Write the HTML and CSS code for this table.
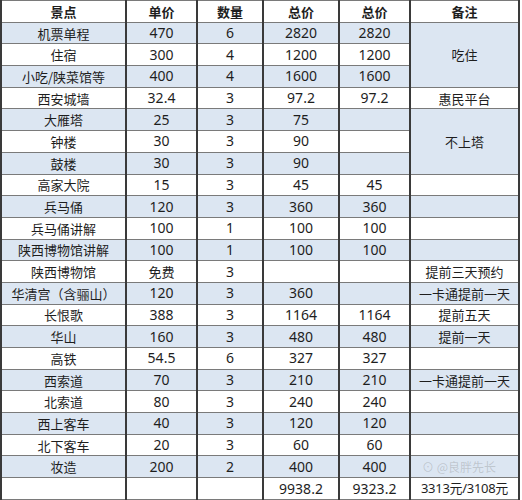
FILE: index.html
```html
<!DOCTYPE html>
<html lang="zh">
<head>
<meta charset="utf-8">
<link rel="stylesheet" href="styles.css">
</head>
<body>
<div class="sheet">
<table class="t">
<colgroup>
<col class="c1"><col class="c2"><col class="c3"><col class="c4"><col class="c5"><col class="c6">
</colgroup>
<tr class="hd"><td class="zh">景点</td><td class="zh">单价</td><td class="zh">数量</td><td class="zh">总价</td><td class="zh">总价</td><td class="zh">备注</td></tr>
<tr class="b"><td class="zh">机票单程</td><td>470</td><td>6</td><td>2820</td><td>2820</td><td class="zh note" rowspan="3">吃住</td></tr>
<tr><td class="zh">住宿</td><td>300</td><td>4</td><td>1200</td><td>1200</td></tr>
<tr class="b"><td class="zh">小吃/陕菜馆等</td><td>400</td><td>4</td><td>1600</td><td>1600</td></tr>
<tr><td class="zh">西安城墙</td><td>32.4</td><td>3</td><td>97.2</td><td>97.2</td><td class="zh">惠民平台</td></tr>
<tr class="b"><td class="zh">大雁塔</td><td>25</td><td>3</td><td>75</td><td></td><td class="zh note" rowspan="3">不上塔</td></tr>
<tr><td class="zh">钟楼</td><td>30</td><td>3</td><td>90</td><td></td></tr>
<tr class="b"><td class="zh">鼓楼</td><td>30</td><td>3</td><td>90</td><td></td></tr>
<tr><td class="zh">高家大院</td><td>15</td><td>3</td><td>45</td><td>45</td><td></td></tr>
<tr class="b"><td class="zh">兵马俑</td><td>120</td><td>3</td><td>360</td><td>360</td><td></td></tr>
<tr><td class="zh">兵马俑讲解</td><td>100</td><td>1</td><td>100</td><td>100</td><td></td></tr>
<tr class="b"><td class="zh">陕西博物馆讲解</td><td>100</td><td>1</td><td>100</td><td>100</td><td></td></tr>
<tr><td class="zh">陕西博物馆</td><td class="zh">免费</td><td>3</td><td></td><td></td><td class="zh">提前三天预约</td></tr>
<tr class="b"><td class="zh">华清宫（含骊山）</td><td>120</td><td>3</td><td>360</td><td></td><td class="zh">一卡通提前一天</td></tr>
<tr><td class="zh">长恨歌</td><td>388</td><td>3</td><td>1164</td><td>1164</td><td class="zh">提前五天</td></tr>
<tr class="b"><td class="zh">华山</td><td>160</td><td>3</td><td>480</td><td>480</td><td class="zh">提前一天</td></tr>
<tr><td class="zh">高铁</td><td>54.5</td><td>6</td><td>327</td><td>327</td><td></td></tr>
<tr class="b"><td class="zh">西索道</td><td>70</td><td>3</td><td>210</td><td>210</td><td class="zh">一卡通提前一天</td></tr>
<tr><td class="zh">北索道</td><td>80</td><td>3</td><td>240</td><td>240</td><td></td></tr>
<tr class="b"><td class="zh">西上客车</td><td>40</td><td>3</td><td>120</td><td>120</td><td></td></tr>
<tr><td class="zh">北下客车</td><td>20</td><td>3</td><td>60</td><td>60</td><td></td></tr>
<tr class="b"><td class="zh">妆造</td><td>200</td><td>2</td><td>400</td><td>400</td><td></td></tr>
<tr><td></td><td></td><td></td><td>9938.2</td><td>9323.2</td><td class="sum">3313元/3108元</td></tr>
</table>
<div class="wm">⊙ @良胖先长</div>
</div>
</body>
</html>
```

FILE: styles.css
```css
html, body {
  margin: 0;
  padding: 0;
  background: #ffffff;
}

.sheet {
  position: relative;
  width: 522px;
  height: 500px;
  overflow: hidden;
}

.t {
  width: 519px;
  height: 500px;
  border-collapse: collapse;
  table-layout: fixed;
  font-family: "Noto Sans", "Noto Sans CJK SC", sans-serif;
  font-size: 14px;
  color: #1e1e1e;
}

.c1 { width: 125px; }
.c2 { width: 71px; }
.c3 { width: 66px; }
.c4 { width: 76px; }
.c5 { width: 71px; }
.c6 { width: 109px; }

.t tr {
  height: 21.7px;
}

.t td {
  padding: 0;
  text-align: center;
  vertical-align: middle;
  white-space: nowrap;
  line-height: 1;
  border-top: 1px solid #7a7a7a;
  border-bottom: 1px solid #7a7a7a;
  border-left: 2px solid #3a3a3a;
  border-right: 2px solid #3a3a3a;
}

.t .zh {
  font-family: "Noto Sans CJK SC", sans-serif;
  font-size: 13px;
}

.t .hd td {
  font-weight: 700;
  background: #ffffff;
}

.t .b td {
  background: #dce6f2;
}

.t td.note {
  background: #dce6f2;
}

.t td.sum {
  font-family: "Noto Sans", "Noto Sans CJK SC", sans-serif;
  font-size: 13px;
  letter-spacing: -0.3px;
}

.wm {
  position: absolute;
  right: 26px;
  bottom: 25px;
  font-family: "Noto Sans CJK SC", sans-serif;
  font-size: 12px;
  color: rgba(120, 120, 120, 0.3);
}
```
